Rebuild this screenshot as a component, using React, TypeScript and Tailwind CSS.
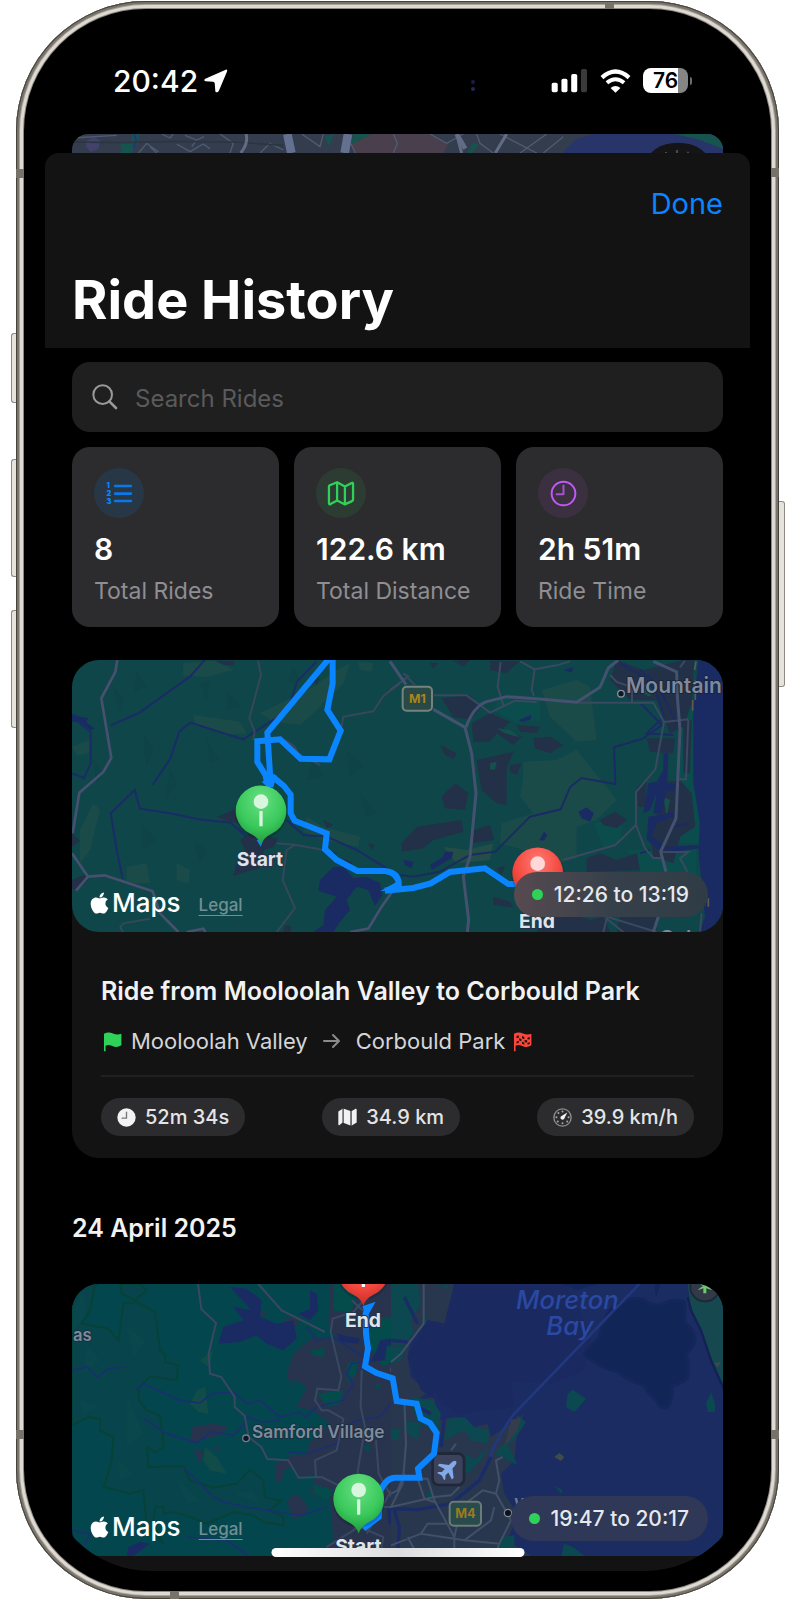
import { FaApple } from "react-icons/fa";
import type { ReactNode } from "react";

function SignalIcon() {
  return (
    <svg viewBox="478 204 110 74" className="h-[25px] w-[37px]" aria-hidden="true">
      <rect x="480" y="248" width="18" height="28" rx="5" fill="#fff" />
      <rect x="509" y="236" width="18" height="40" rx="5" fill="#fff" />
      <rect x="538" y="222" width="18" height="54" rx="5" fill="#fff" />
      <rect x="567" y="207" width="18" height="69" rx="5" fill="#3a3a3a" />
    </svg>
  );
}

function WifiIcon() {
  return (
    <svg viewBox="624 202 94 74" className="h-[25px] w-[31px]" aria-hidden="true">
      <path d="M630 230Q671 194 712 230" fill="none" stroke="#fff" strokeWidth="13" />
      <path d="M645 246Q671 224 697 246" fill="none" stroke="#fff" strokeWidth="12" />
      <path d="M656 262Q671 250 686 262L671 276Z" fill="#fff" />
    </svg>
  );
}

function Battery() {
  return (
    <div className="flex items-center gap-[2px]">
      <div className="flex h-[25px] w-[45px] items-center justify-center rounded-[8px] bg-linear-to-r from-white from-78% to-[#858585] to-78% text-[21px] leading-6 font-semibold text-black">
        76
      </div>
      <div className="h-2 w-[2px] rounded-r-full bg-[#6b6b6b]" />
    </div>
  );
}

function StatusBar() {
  return (
    <div className="flex h-[125px] items-center justify-between pt-[18px] pr-[79px] pl-[89px]">
      <div className="flex items-center gap-[6px]">
        <span className="text-[30px] leading-9 font-medium">20:42</span>
        <svg viewBox="613 205 74 74" className="size-6" aria-hidden="true">
          <path
            d="M680 207Q686 206 684 213L659 272Q654 281 648 274L646 248Q645 245 641 244L618 243Q610 241 617 235Z"
            fill="#fff"
          />
        </svg>
      </div>
      <div className="flex items-center gap-3">
        <svg viewBox="0 0 8 12" className="mt-2 mr-[62px] h-3 w-2" aria-hidden="true">
          <circle cx="4" cy="3" r="2" fill="#1d1b4d" />
          <circle cx="4" cy="10" r="2" fill="#26265c" />
        </svg>
        <SignalIcon />
        <WifiIcon />
        <Battery />
      </div>
    </div>
  );
}

function BackdropMap() {
  return (
    <div className="mx-[27px] h-[19px] overflow-hidden rounded-t-[16px]">
      <svg viewBox="216 402 1953 57" preserveAspectRatio="none" className="size-full" aria-hidden="true">
        <rect x="216" y="402" width="1953" height="57" fill="#343d4d" />
        <path d="M258 424L280 412L300 420L296 446L272 456L258 440Z" fill="#42426a" />
        <path d="M360 426L392 424L395 402H420L412 430L395 459H365Z" fill="#17544f" />
        <path d="M402 402L408 420L400 446" stroke="#24357a" strokeWidth="6" fill="none" />
        <path d="M975 408L1003 402L985 440Z M1060 402H1115L1052 436Z" fill="#17544f" />
        <path d="M1115 402H1290L1346 430L1330 459H1066L1050 436Z" fill="#4a3f4d" />
        <path d="M1400 459L1418 430L1436 432L1416 459Z" fill="#17544f" />
        <path d="M1690 459Q1725 402 1800 402H2169V459Z" fill="#28356a" />
        <path d="M2025 402H2169V446L2100 420Z" fill="#17544f" />
        <g fill="none" stroke="#505b71" strokeWidth="4">
          <path d="M216 414L350 406M416 459L440 430L476 456M450 440L470 459M485 402L510 414L520 402M555 406L590 420L612 410M590 420L575 440M530 432L570 455L610 432L630 446M660 402L700 430L690 459M780 459L810 430L850 450M905 402L960 440L970 402M1180 402L1192 430L1180 459M1052 430L1066 459" />
          <path d="M1290 402L1340 430L1390 402M1430 402L1440 430L1480 459M1500 402L1610 459M1560 459L1640 402M1630 459L1690 410" />
        </g>
        <path d="M216 426L370 428L520 424L700 426L850 436" fill="none" stroke="#2c3542" strokeWidth="5" />
        <path d="M738 402Q746 430 722 459M1370 402L1385 459M1520 402L1486 459" fill="none" stroke="#626c84" strokeWidth="9" />
        <path d="M862 402L874 459M1044 402L1034 459" fill="none" stroke="#64708f" strokeWidth="26" />
        <path d="M1370 402L1396 446" stroke="#626c84" strokeWidth="14" />
        <ellipse cx="2034" cy="492" rx="95" ry="64" fill="#151518" />
        <path d="M2031 450V459M2064 455V459M1998 456V459" stroke="#66666a" strokeWidth="4" />
      </svg>
    </div>
  );
}

function NumberedListIcon() {
  return (
    <svg viewBox="316 422 80 78" className="h-[26px] w-[27px]" fill="#0a84ff" aria-hidden="true">
      <path d="M343 440H390M343 463H390M343 485H390" stroke="#0a78e8" strokeWidth="8" strokeLinecap="round" />
      <g fontSize="22" fontWeight="900" fontFamily="Inter, sans-serif">
        <text x="317" y="447">1</text>
        <text x="317" y="471">2</text>
        <text x="317" y="494">3</text>
      </g>
    </svg>
  );
}

function MapOutlineIcon() {
  return (
    <svg viewBox="978 422 86 78" className="h-[26px] w-[28px]" fill="none" stroke="#30d158" strokeWidth="7" strokeLinejoin="round" aria-hidden="true">
      <path d="M984 441Q984 438 987 437L1009 428L1033 441L1054 430Q1058 428 1058 433V480Q1058 484 1055 486L1033 496L1009 484L989 495Q984 497 984 492ZM1009 428V484M1033 441V496" />
    </svg>
  );
}

function ClockOutlineIcon() {
  return (
    <svg viewBox="474 420 82 82" className="size-[27px]" fill="none" stroke="#bf5af2" strokeWidth="6" strokeLinecap="round" strokeLinejoin="round" aria-hidden="true">
      <circle cx="515" cy="461" r="36" />
      <path d="M515 437V463H494" stroke="#a650d2" />
    </svg>
  );
}

function ClockFilledIcon() {
  return (
    <svg viewBox="0 0 56 56" className="size-[19px]" aria-hidden="true">
      <circle cx="28" cy="28" r="27" fill="#f2f2f4" />
      <path d="M28 12V30H15" fill="none" stroke="#77777a" strokeWidth="4" strokeLinecap="round" strokeLinejoin="round" />
    </svg>
  );
}

function MapFilledIcon() {
  return (
    <svg viewBox="0 0 58 54" className="h-[18px] w-[19px]" fill="#f2f2f4" aria-hidden="true">
      <path d="M1 10L14 2V44L4 52Q1 53 1 49ZM18 2L38 9V53L18 45ZM42 9L54 2Q57 1 57 5V44L42 53Z" />
      <path d="M14 2H18V45H14ZM38 9H42V53H38Z" fill="#77777a" />
    </svg>
  );
}

function GaugeIcon() {
  return (
    <svg viewBox="0 0 56 56" className="size-[19px]" aria-hidden="true">
      <circle cx="28" cy="28" r="25.500" fill="none" stroke="#8e8e92" strokeWidth="4" />
      <g fill="#a5a5a9">
        <circle cx="28" cy="10" r="3" />
        <circle cx="16" cy="15" r="3" />
        <circle cx="10" cy="27" r="3" />
        <circle cx="14" cy="40" r="3" />
        <circle cx="46" cy="27" r="3" />
        <circle cx="42" cy="40" r="3" />
        <circle cx="28" cy="45" r="3" />
      </g>
      <path d="M42 13L33 32A6 6 0 1 1 23 25Z" fill="#f2f2f4" />
    </svg>
  );
}

function StartFlag() {
  return (
    <svg viewBox="308 270 62 64" className="h-[21px] w-5" aria-hidden="true">
      <path d="M311 278Q325 270 339 277Q352 283 365 278V314Q350 323 337 316Q326 311 316 315V332H311Z" fill="#30d158" />
    </svg>
  );
}

function FinishFlag() {
  return (
    <svg viewBox="353 270 62 64" className="h-[21px] w-5" aria-hidden="true">
      <path d="M356 278Q370 270 384 277Q397 283 410 278V314Q395 323 382 316Q371 311 361 315V332H356Z" fill="#ff453a" />
      <path
        d="M364 285L371 283V290L364 292ZM381 285L388 288V295L381 292ZM398 290L405 288V295L398 296ZM372 292L379 294V301L372 299ZM389 297L397 298V305L389 304ZM364 302L371 300V306L364 308ZM381 303L388 306V312L381 309ZM398 306L405 304V310L398 312Z"
        fill="#131313"
      />
    </svg>
  );
}

function Pin({ x, y, kind }: { x: number; y: number; kind: "start" | "end" }) {
  return (
    <g transform={`translate(${x} ${y})`}>
      <circle cx="0" cy="6" r="79" fill="#000" opacity="0.14" />
      <path
        d="M0 104Q-6 82 -30 70A76 76 0 1 1 30 70Q6 82 0 104Z"
        fill={kind === "start" ? "url(#pin-start)" : "url(#pin-end)"}
      />
      <circle cx="0" cy="-27" r="22" fill={kind === "start" ? "#d8f5de" : "#ffd9d7"} />
      <rect x="-5" y="1" width="10" height="46" rx="2" fill={kind === "start" ? "#d8f5de" : "#fff"} />
    </g>
  );
}

function PinColours() {
  return (
    <defs>
      <radialGradient id="pin-start" cx="0.5" cy="0.25" r="0.75">
        <stop offset="0" stopColor="#69df83" />
        <stop offset="0.6" stopColor="#39c95b" />
        <stop offset="1" stopColor="#21963b" />
      </radialGradient>
      <radialGradient id="pin-end" cx="0.5" cy="0.25" r="0.75">
        <stop offset="0" stopColor="#ff7a73" />
        <stop offset="0.6" stopColor="#f4483f" />
        <stop offset="1" stopColor="#c42c25" />
      </radialGradient>
    </defs>
  );
}

function MooloolahMap() {
  return (
    <svg viewBox="36 30 1953 816" preserveAspectRatio="xMidYMid slice" className="absolute inset-0 size-full" fontFamily="Inter, sans-serif" role="img" aria-label="Route from Mooloolah Valley to Corbould Park">
      <PinColours />
      <rect x="36" y="30" width="1953" height="816" fill="#0f464a" />
      <g fill="#1b4b49">
        <path d="M370 40L470 32L520 60L440 80L370 78ZM400 195L540 215L560 250L500 255L405 220ZM600 190L760 110L830 60L870 40L850 100L760 190L720 225L640 215ZM895 35L940 40L935 65L900 60ZM36 290L90 270L86 310L50 316ZM740 500L790 530L900 560L895 590L790 570L730 545ZM60 540L100 460L120 480L90 600L60 640ZM200 650L260 640L270 700L200 700ZM350 640L390 660L385 700L350 690Z" />
      </g>
      <g fill="#0b3d41" opacity="0.25">
        <path d="M160 110L190 150L180 190ZM230 60L260 110L220 130ZM250 250L280 300L260 350ZM420 100L450 90L440 150ZM330 350L350 400L320 440ZM440 270L480 330L450 340ZM100 330L130 370L110 400ZM760 330L790 380L740 390ZM860 300L910 350L870 380ZM400 570L440 600L420 640ZM250 530L290 570L250 600ZM900 430L950 490L920 500ZM700 50L720 90L680 100ZM500 120L540 170L500 180Z" />
      </g>
      <g fill="#223048">
        <path d="M465 32H525L520 46L490 44ZM470 500L510 485L530 470L540 520L500 512ZM540 570L570 550L655 565L640 590L612 600L600 655L560 665L520 678L530 640L560 610ZM36 690L80 672L85 690L50 722L36 715ZM36 550L60 572L36 590ZM760 90L780 85L770 105ZM790 510L820 525L800 535ZM925 580L945 585L935 600ZM810 600L830 610L820 625ZM850 625L880 640L860 648ZM675 825L695 830L690 846H670Z" />
      </g>
      <g fill="#1a2b63">
        <path d="M36 192L60 200L85 204L78 216L104 236L92 240L60 216H36Z" />
        <path d="M780 690L820 650L850 650L880 685L920 680L960 700L968 735L945 768L925 720L890 710L860 750L870 780L840 815L820 846H760L790 825L795 780L830 740L775 722Z" />
      </g>
      <g fill="none" stroke="#1b2b66" strokeWidth="6">
        <path d="M434 30L390 80L235 190L152 226M770 34L710 96L694 150L670 190L550 268L460 240L392 218L358 244L330 328L278 404M36 200L92 246V340L72 384L36 370M188 686L170 600L152 490L224 420L240 476L330 490L415 508L512 518L560 560M680 510L730 555L800 560L890 600L980 655" />
      </g>
      <g fill="none" stroke="#36465b" strokeWidth="6">
        <path d="M594 32L603 74L568 205L584 244L580 270M845 230L850 200L940 184L970 138L1020 100M650 580L705 584L790 600M705 584L680 600L668 690L705 774L650 846M180 832L190 820L270 806M180 832L190 846M640 265Q700 270 714 310L780 345" />
      </g>
      <g fill="none" stroke="#47506f" strokeWidth="8">
        <path d="M172 30L166 66L124 145L154 324L130 366L58 428L38 550M36 610L84 680L134 676L278 724L300 790L355 846M84 680L48 722M380 846L430 836L436 846M1000 720L965 770L925 836L870 846" />
      </g>
      <g transform="translate(990 0)">
        <path d="M455 120L560 90L600 110L620 270L560 275L480 200ZM400 335L500 330L560 300L640 400L680 450L620 510L560 530L560 625L480 645L400 600L330 580L335 520L430 490L390 440L400 380Z" fill="#1b4b49" />
        <path d="M160 590L230 600L310 580L300 630L200 640Z" fill="#234d46" />
        <path d="M330 140L450 150L450 210L380 220L310 180ZM880 150H915L930 580H870L860 520ZM610 520L700 500L690 580L640 590ZM710 600H920V800L830 790Z" fill="#0b4c4c" />
        <g fill="#223048">
          <path d="M155 145L240 135L275 170L240 210L190 200ZM245 220L300 190L360 215L340 235L395 260L370 285L320 250L300 275L250 275ZM380 225L450 230L440 250L390 245ZM430 265L480 260L520 285L480 310L435 295ZM260 330L370 305L350 355V465L320 460L275 420ZM360 345L395 340L380 375L360 365ZM155 440L195 400L235 430L225 480L165 475ZM35 580L80 530L215 510L220 545L130 570L100 595L35 605ZM240 545L300 525L312 570L250 580ZM150 285L200 310L190 328L165 315ZM630 510L675 485L712 510L680 535L640 525ZM590 625L630 610L680 630L740 610L750 660L590 665ZM470 800L540 790L600 810L640 800L660 846H440ZM310 740L360 755L370 772L310 765ZM320 655L345 648L335 675Z" />
          <path d="M680 30L760 60L880 30H912L905 160L880 230L840 250L800 150L720 150L660 90ZM770 265L855 265L850 310L780 305ZM800 400L870 390L905 430L915 530L870 560L850 640L790 620L780 560L800 500ZM740 410L770 395L765 470H745ZM880 210L905 210L900 370H880ZM690 800H800V846H680ZM300 32L390 32L350 70L300 60ZM120 40L145 38L130 55ZM190 32L240 30L220 50Z" />
        </g>
        <g fill="#16504c">
          <path d="M320 235L360 240L390 262L345 250ZM300 340L320 335L315 360L300 358ZM760 100L790 110L780 140L755 130ZM820 440L840 450L830 500Z" />
        </g>
        <path d="M925 30H1000V846H930L945 800L925 600L930 520L910 400V180Z" fill="#1a2b63" />
        <g fill="#1a2b63">
          <path d="M385 210L425 195L420 210L395 216ZM565 485L590 472L612 490L600 515L575 505ZM448 570L462 545L472 555L462 572ZM40 630L70 635L65 655L45 645ZM120 645L160 620L165 605L190 605L185 625L150 645L125 660ZM520 60L550 52L545 68ZM775 400L800 395L820 360V310L835 310L832 400L858 405L850 425L830 420L815 490L790 490L800 430L780 480L760 490ZM775 500L810 495L850 485V500L800 520L785 560L830 590L925 585V595L860 605L800 595L770 570Z" />
        </g>
        <g fill="none" stroke="#1a2b63" strokeWidth="6">
          <path d="M30 675L70 680L150 665L240 615L316 605L420 500L512 478L540 412L574 384L676 402L672 292L760 265L816 225L752 160M690 40L760 80L800 130L822 200L770 250L850 255M750 60L800 100L860 220M850 530L895 520M750 610L780 600" />
        </g>
        <g fill="none" stroke="#3a4860" strokeWidth="6">
          <path d="M332 36L323 110L340 166M390 34L434 58L425 120L432 138M434 58L500 46L540 34M230 136H132M230 136L300 188L375 152L440 156M560 158H790L822 216L796 358L738 426V525L765 595L790 624H815M738 525L676 585L520 630M822 216L895 208M660 75L680 96L726 112V155M40 70L55 80L0 120M55 85L75 105M866 388H888L895 210M812 606H895L870 625L892 665M640 846L650 806L700 846M650 800L800 846M870 52L885 32M930 846L935 790" />
        </g>
        <g fill="none" stroke="#45526f" strokeWidth="9">
          <path d="M0 34L48 104M130 178L225 232L245 310L258 430L240 620L220 680L236 810L232 846M228 232Q250 170 290 155L350 140L440 146L560 157L630 112L655 54L685 30M790 34L860 66L862 140L870 240L858 505L812 605L828 665M805 800L790 846" />
        </g>
        <path d="M918 34L914 60M916 90V150M908 150V182M955 745V770" stroke="#5c5a50" strokeWidth="5" />
        <rect x="38" y="110" width="88" height="72" rx="12" fill="#294947" stroke="#75837f" strokeWidth="6" />
        <text x="82" y="160" fontSize="37" fontWeight="700" fill="#a8851d" textAnchor="middle">M1</text>
        <circle cx="693" cy="131" r="10" fill="#111722" stroke="#8790a0" strokeWidth="4" />
        <text x="708" y="130" fontSize="63" fontWeight="600" fill="#7f899d" stroke="#172335" strokeWidth="5" paintOrder="stroke">Mountain</text>
        <text x="808" y="884" fontSize="61" fontWeight="600" fill="#7f899d">Cal</text>
      </g>
      <g fill="none" stroke="#0a84ff" strokeWidth="18" strokeLinejoin="miter">
        <path d="M812 20L622 248L632 400L592 336V274L660 268L722 326L808 328L842 242L802 180L818 100V20" />
        <path d="M610 388L640 382L672 408L692 434V490L704 512L800 550L795 598L830 630L892 663H975Q1020 668 1016 712L975 722L1060 714L1112 700L1170 666L1275 655L1345 702H1400" />
      </g>
      <path d="M605 395L650 375L640 412H622Z" fill="#0a84ff" />
      <path d="M960 724L1020 690V718Z" fill="#0a84ff" />
      <path d="M590 570H610L602 590Z" fill="#0a84ff" />
      <Pin x={603} y={482} kind="start" />
      <Pin x={1433} y={668} kind="end" />
      <g fontSize="58" fontWeight="700" fill="#dfe4eb" stroke="#26334a" strokeWidth="6" paintOrder="stroke" textAnchor="middle">
        <text x="600" y="647">Start</text>
        <text x="1431" y="833">End</text>
      </g>
    </svg>
  );
}

function MoretonMap() {
  return (
    <svg viewBox="216 71 1953 816" preserveAspectRatio="xMidYMid slice" className="absolute inset-0 size-full" fontFamily="Inter, sans-serif" role="img" aria-label="Route beside Moreton Bay">
      <rect x="216" y="71" width="1953" height="816" fill="#04464e" />
      <g fill="#08444b" stroke="#074239" strokeWidth="6">
        <path d="M360 71L365 100L405 120L440 90L420 71ZM285 71L270 150L245 190L300 200L325 205L355 240L370 130L410 125L465 155L480 270L495 280V305L535 315L530 360L450 348L415 385L418 420L440 450L480 465L492 560L465 575L440 560L446 620L550 618L570 660L640 682L710 670L750 628L790 660L795 712L845 720L810 750L850 770V795L790 785L760 765L700 755L620 790L570 770L525 755L490 760V740L465 740L460 790L490 850L440 800L430 690L390 700L312 680L335 600L340 530L300 510V475L265 470L216 495V71Z" />
      </g>
      <g fill="#0a5050" opacity="0.25">
        <path d="M250 90L216 150V220L260 160ZM260 250L300 300L250 340ZM380 200L440 240L400 290ZM240 420L300 440L250 460ZM380 400L430 520L380 560ZM520 640L600 720L560 730ZM700 700L760 690L780 730ZM350 600L400 640L360 660Z" />
      </g>
      <g fill="#124c49">
        <path d="M590 390L615 380L625 460L595 455L570 430ZM615 560L650 590L680 640L630 630L610 600ZM600 300L640 270L625 320Z" />
      </g>
      <g fill="#28344e">
        <path d="M990 71H1200V887H940L1000 840L990 720L930 700L950 640L900 650L860 590L920 580L930 545L990 490L940 450L890 440L920 380L860 340L880 280L940 230L1010 240L985 190Z" />
        <path d="M575 500L640 490L685 500L660 525L570 545ZM580 570L610 572L600 610ZM650 560L660 556V570L640 572ZM825 610L870 595L880 620L850 630L845 665L825 660ZM860 720L890 700L925 740L915 765L880 775ZM775 155H800L790 170ZM850 170H910L880 205ZM860 350L880 335L878 375Z" />
      </g>
      <g fill="#044b4c">
        <path d="M1000 71H1090L1050 160L1000 150ZM950 400L1030 390L1020 430L985 440ZM930 270L975 262L970 290L940 285ZM1120 170H1200V290L1150 320L1100 250ZM940 670L1000 690L985 720L940 700ZM1090 560L1110 550L1105 580ZM1120 375L1140 370L1135 390ZM1040 310L1070 300V340L1040 370Z" />
      </g>
      <g fill="#1a2b63">
        <path d="M690 80L740 85L785 120L780 170L830 190L880 180L890 235L850 270L800 250L770 225L720 245L655 250L670 200L730 180L700 140L755 150ZM930 90L950 100L955 150L930 180L895 160L930 145ZM1010 220L1080 235L1075 250L1020 245ZM1140 240L1200 230V250L1160 258L1155 300L1110 305L1130 270ZM385 860L420 845L450 850L400 887H380ZM1160 740L1190 735L1185 800L1165 790Z" />
      </g>
      <g fill="none" stroke="#1b2f70" strokeWidth="5">
        <path d="M216 330L262 320L292 350L325 325L380 320M405 390L430 370L540 420L600 428L635 400L700 395L740 430L780 420L840 470L900 455L915 470L950 440L1030 420L1060 370L1040 340L1055 310L1120 300M432 475L500 520L590 548L635 515L700 525L735 490L740 470L790 485L840 480M550 620L640 710L670 725L740 740L800 750L900 765L980 740M860 575L920 580L1010 550L1030 500L1070 480L1140 470L1180 420M920 200L950 240L1000 230L1090 290M560 830L680 840L745 887M216 810L270 820L250 860" />
      </g>
      <g fill="none" stroke="#39485f" strokeWidth="6">
        <path d="M594 71L604 146L648 188L626 280L630 340L664 350L704 410V440L734 466L746 530L784 560L802 596L865 600L896 652L965 650L1015 675M775 71L845 150L975 215M1100 110L1060 155L998 175L992 215L1024 350L1015 390L952 385L945 420L965 450H985L1030 475L1010 570L945 600L948 650M1085 330L1082 440L1095 500L1072 640M1128 540L1136 640L1180 720M1180 300L1172 330L1200 350M1055 120L1100 160M980 860L1060 810L1150 740H1200M1080 800L1150 830L1140 887M1100 820L1180 680L1200 670" />
      </g>
      <g transform="translate(1173 0)">
        <rect x="0" y="71" width="1000" height="816" fill="#1b2c63" />
        <path d="M0 71H190L180 130L165 190L110 180L60 230L50 290L60 350L110 395L80 420L130 410L140 480L200 470L250 500L290 490L300 530L400 460L380 500L370 600L330 640L340 700L380 760L350 840L420 887H0Z" fill="#28374d" />
        <path d="M0 71H80L90 130L60 180L70 220L30 260L0 250ZM60 410L125 420L150 460L140 530L110 500L75 480ZM170 475L220 470L250 500L295 510L290 550L240 540L220 510L160 540ZM380 465L405 485L370 540L350 550L380 615L310 580L350 540ZM250 600L290 560L270 600L230 640L170 660L230 580ZM530 400L545 388L585 415L550 455L525 440ZM90 180L110 170L105 190ZM40 480L90 490L80 540L50 520ZM100 700L130 690L120 720ZM0 260L50 260L30 300L0 310ZM490 675L515 690L510 700ZM520 850L550 862L580 887H510ZM330 830L370 825V887H320ZM960 395L972 430V455L950 455L945 430ZM0 500L30 510L20 540H0ZM140 80L170 71L175 85Z" fill="#0c484f" />
        <path d="M890 71H1000V380L960 300L930 210L900 150Z" fill="#164850" />
        <path d="M890 110L900 150L930 210L960 300L1000 390" fill="none" stroke="#152054" strokeWidth="7" />
        <path d="M360 480L390 470L380 510L340 560Z" fill="#353d4c" />
        <path d="M490 590L505 578L520 590L510 602ZM970 308L990 305L980 320Z" fill="#3f4b4b" />
        <path d="M190 71H520L560 130L600 240L580 330L480 370L360 360L370 440L200 460L90 390L50 290L110 180L160 190Z" fill="#1a2a60" />
        <path
          d="M690 130Q720 108 760 118Q790 145 820 128Q850 112 880 125Q885 160 878 185Q912 205 912 240Q905 265 885 280Q900 320 888 355Q865 372 842 378Q848 415 828 442Q805 445 798 422Q770 400 760 375Q710 360 680 335Q620 320 580 282Q600 250 625 235Q630 200 645 178Q650 140 690 130Z"
          fill="#112556"
          stroke="#15275a"
          strokeWidth="10"
          strokeLinejoin="round"
        />
        <path d="M510 71H620L560 90ZM790 71H810L795 110Z" fill="#14275c" />
        <path d="M745 71L370 460Q310 540 290 610L255 670L200 710L180 750" fill="none" stroke="#21377e" strokeWidth="8" />
        <path d="M40 110L80 190M0 240L50 245M0 745L80 748L180 730L265 660L300 590M10 750L25 800L20 887M130 400L160 470L150 560M80 440L120 460" fill="none" stroke="#1b2b66" strokeWidth="10" />
        <g fill="none" stroke="#414f69" strokeWidth="6">
          <path d="M98 71V190L30 280L0 305M40 420L45 550L35 670L0 740L130 710L180 705L205 680M80 655H110L130 720L190 830V887M80 655L100 715L130 725M0 855L90 820L220 840L325 850L360 780L315 700L275 690L210 740L190 830M315 700L325 660L315 600L335 590M170 790H110L90 820M310 740L300 780L220 840M50 830L80 887M0 700L20 690L40 640M325 850L310 887M180 570L195 550" />
        </g>
        <text x="375" y="147" fontSize="77" fontWeight="500" fontStyle="italic" fill="#2a49a2">Moreton</text>
        <text x="466" y="223" fontSize="77" fontWeight="500" fontStyle="italic" fill="#2a49a2">Bay</text>
        <circle cx="942" cy="79" r="44" fill="#323a48" stroke="#1d2635" strokeWidth="5" />
        <path d="M920 90Q942 64 964 90L946 84V99H937V84ZM942 84L928 71H956Z" fill="#73c66f" />
        <rect x="125" y="580" width="94" height="94" rx="18" fill="#3b435c" stroke="#1f2739" strokeWidth="8" />
        <g transform="translate(172 626) rotate(45) scale(2.500)">
          <path d="M0-13Q3-13 3-6V-4L12 3V6L3 3V8L6 11V13L0 11L-6 13V11L-3 8V3L-12 6V3L-3-4V-6Q-3-13 0-13Z" fill="#82aae8" />
        </g>
        <rect x="176" y="724" width="94" height="72" rx="12" fill="#294b4c" stroke="#6b7b77" strokeWidth="6" />
        <text x="223" y="774" fontSize="38" fontWeight="700" fill="#9b7b20" textAnchor="middle">M4</text>
        <circle cx="351" cy="758" r="11" fill="#0c1018" stroke="#7d8798" strokeWidth="4" />
        <text x="370" y="753" fontSize="50" fontWeight="600" fill="#707b92">W</text>
      </g>
      <circle cx="738" cy="534" r="10" fill="#111722" stroke="#727d8d" strokeWidth="4" />
      <g fontWeight="600" fill="#7f8b9b" stroke="#1b2b3d" strokeWidth="4" paintOrder="stroke">
        <text x="756" y="533" fontSize="52">Samford Village</text>
        <text x="219" y="242" fontSize="50">as</text>
      </g>
      <path d="M1090 146L1108 140L1097 160L1098 220L1104 265L1095 318L1130 338L1178 354L1190 422L1250 430L1262 474L1290 488L1310 518L1302 580L1254 625L1258 652H1188Q1160 650 1142 690L1136 770L1090 805" fill="none" stroke="#0a84ff" strokeWidth="18" />
      <Pin x={1090} y={33} kind="end" />
      <Pin x={1076} y={716} kind="start" />
      <g fontSize="58" fontWeight="700" fill="#dfe4eb" stroke="#26334a" strokeWidth="6" paintOrder="stroke" textAnchor="middle">
        <text x="1089" y="200">End</text>
        <text x="1075" y="877">Start</text>
      </g>
    </svg>
  );
}

function RideMap({ time, badge, children }: { time: string; badge: string; children: ReactNode }) {
  return (
    <div className="relative flex h-[272px] items-end justify-between overflow-hidden rounded-[27px] pr-[15px] pb-[15px] pl-[18px]">
      {children}
      <div className="relative flex items-center gap-[18px]">
        <span className="flex items-center gap-[3px]">
          <FaApple className="h-6 w-[19px]" aria-hidden="true" />
          <span className="text-[26px] leading-7 font-medium">Maps</span>
        </span>
        <a href="#legal" className="pt-1 text-[17px] leading-5 font-medium text-[#6f9093] underline underline-offset-4">
          Legal
        </a>
      </div>
      <div className={`relative flex h-[45px] items-center gap-[11px] rounded-full pr-[19px] pl-[18px] text-[21px] leading-7 font-medium text-[#e6e8ec] ${badge}`}>
        <span className="size-[11px] rounded-full bg-[#30d158]" />
        {time}
      </div>
    </div>
  );
}

function StatCard({ tint, icon, value, label }: { tint: string; icon: ReactNode; value: string; label: string }) {
  return (
    <div className="flex h-[180px] min-w-0 flex-1 flex-col rounded-[18px] bg-[#2c2c2e] px-[22px] pt-[21px] whitespace-nowrap">
      <div className={`flex size-[50px] items-center justify-center rounded-full ${tint}`}>{icon}</div>
      <div className="mt-[13px] text-[30px] leading-9 font-semibold">{value}</div>
      <div className="mt-[10px] text-[23px] leading-7 text-[#8e8e93]">{label}</div>
    </div>
  );
}

function MetricPill({ icon, children }: { icon: ReactNode; children: ReactNode }) {
  return (
    <li className="flex h-[38px] items-center gap-[9px] rounded-full bg-[#2c2c2e] px-4 text-[20px] font-medium text-[#e4e4e6]">
      {icon}
      {children}
    </li>
  );
}

function FrameDetails() {
  return (
    <div aria-hidden="true">
      <div className="absolute top-[332px] -left-[5px] h-[70px] w-[5px] rounded-l-[3px] border border-r-0 border-[#8f8a82] bg-[#e6e3dd]" />
      <div className="absolute top-[458px] -left-[5px] h-[118px] w-[5px] rounded-l-[3px] border border-r-0 border-[#8f8a82] bg-[#e6e3dd]" />
      <div className="absolute top-[609px] -left-[5px] h-[118px] w-[5px] rounded-l-[3px] border border-r-0 border-[#8f8a82] bg-[#e6e3dd]" />
      <div className="absolute top-[500px] -right-[6px] h-[186px] w-[6px] rounded-r-[3px] border border-l-0 border-[#8f8a82] bg-[#e6e3dd]" />
      <div className="absolute top-[168px] left-0 h-[9px] w-2 bg-[#78736a]" />
      <div className="absolute top-[167px] right-0 h-[9px] w-2 bg-[#78736a]" />
      <div className="absolute bottom-[160px] left-0 h-[9px] w-2 bg-[#78736a]" />
      <div className="absolute right-0 bottom-[160px] h-[9px] w-2 bg-[#78736a]" />
      <div className="absolute top-[2px] right-[165px] h-[6px] w-[9px] bg-[#78736a]" />
      <div className="absolute bottom-0 left-[154px] h-2 w-[9px] bg-[#78736a]" />
    </div>
  );
}

export default function App() {
  return (
    <div className="bg-white pt-px pr-3 pb-px pl-4 font-[Inter,sans-serif] text-white">
      <div className="relative rounded-[130px] bg-black p-2 shadow-[inset_0_0_0_1px_#45423c,inset_0_0_0_3px_#79746b,inset_0_0_0_4px_#aaa59c,inset_0_0_0_7px_#dedad3,inset_0_0_0_8px_#8d8981]">
        <FrameDetails />
        <StatusBar />
        <main className="relative mx-[21px] mb-5 overflow-hidden rounded-b-[106px]">
          <BackdropMap />
          <header className="h-[195px] rounded-t-[14px] bg-[#131313] px-[27px] pt-[33px]">
            <div className="flex justify-end">
              <button type="button" className="text-[29px] leading-9 text-[#0a84ff]">
                Done
              </button>
            </div>
            <h1 className="mt-[46px] text-[54px] leading-[64px] font-bold">Ride History</h1>
          </header>

          <div className="px-[27px] pt-[14px]">
            <label className="flex h-[70px] items-center gap-[17px] rounded-[18px] bg-[#1f1f1f] pl-5">
              <svg viewBox="276 134 78 78" className="size-[26px] shrink-0" fill="none" stroke="#99999c" strokeWidth="6" aria-hidden="true">
                <circle cx="308" cy="166" r="28" />
                <path d="M328 186L348 206" strokeWidth="8" strokeLinecap="round" />
              </svg>
              <span className="sr-only">Search rides</span>
              <input
                type="search"
                placeholder="Search Rides"
                className="h-10 min-w-0 flex-1 bg-transparent pt-[2px] text-[24px] leading-9 text-white outline-none placeholder:text-[#5a5a5c]"
              />
            </label>

            <section className="mt-[15px] flex gap-[15px]" aria-label="Totals">
              <StatCard tint="bg-[#283746]" icon={<NumberedListIcon />} value="8" label="Total Rides" />
              <StatCard tint="bg-[#2c3c32]" icon={<MapOutlineIcon />} value="122.6 km" label="Total Distance" />
              <StatCard tint="bg-[#3b3040]" icon={<ClockOutlineIcon />} value="2h 51m" label="Ride Time" />
            </section>

            <article className="mt-[33px] rounded-b-[27px] bg-[#131313]">
              <div className="bg-linear-to-b from-black from-50% to-transparent to-50%">
                <RideMap time="12:26 to 13:19" badge="bg-linear-to-r from-[#584a50] via-[#36404a] via-50% to-[#2f3c46]">
                  <MooloolahMap />
                </RideMap>
              </div>
              <div className="px-[29px] pt-[43px] pb-[22px] whitespace-nowrap">
                <h2 className="text-[25px] leading-8 font-semibold text-[#f2f2f4]">
                  Ride from Mooloolah Valley to Corbould Park
                </h2>
                <div className="mt-4 flex h-9 items-center pl-[2px] text-[22px] text-[#d5d5d8]">
                  <StartFlag />
                  <span className="ml-2">Mooloolah Valley</span>
                  <svg viewBox="0 0 18 16" className="mx-[15px] h-4 w-[18px]" fill="none" stroke="#8b8b8f" strokeWidth="2" strokeLinecap="round" strokeLinejoin="round" aria-hidden="true">
                    <path d="M1 8H16M10 2L16 8L10 14" />
                  </svg>
                  <span className="mr-2">Corbould Park</span>
                  <FinishFlag />
                </div>
                <hr className="mt-4 border-t-2 border-[#202022]" />
                <ul className="mt-[21px] flex justify-between">
                  <MetricPill icon={<ClockFilledIcon />}>52m 34s</MetricPill>
                  <MetricPill icon={<MapFilledIcon />}>34.9 km</MetricPill>
                  <MetricPill icon={<GaugeIcon />}>39.9 km/h</MetricPill>
                </ul>
              </div>
            </article>

            <h2 className="mt-[54px] text-[25px] leading-8 font-semibold text-[#f2f2f4]">24 April 2025</h2>

            <article className="mt-10 bg-linear-to-b from-black from-50% to-[#131313] to-50% pb-[15px]">
              <RideMap time="19:47 to 20:17" badge="bg-[#2f3856]">
                <MoretonMap />
              </RideMap>
            </article>
          </div>
          <div className="absolute bottom-[14px] left-1/2 h-[9px] w-[253px] -translate-x-1/2 rounded-full bg-linear-to-r from-white via-[#dddddf] to-white" />
        </main>
      </div>
    </div>
  );
}
